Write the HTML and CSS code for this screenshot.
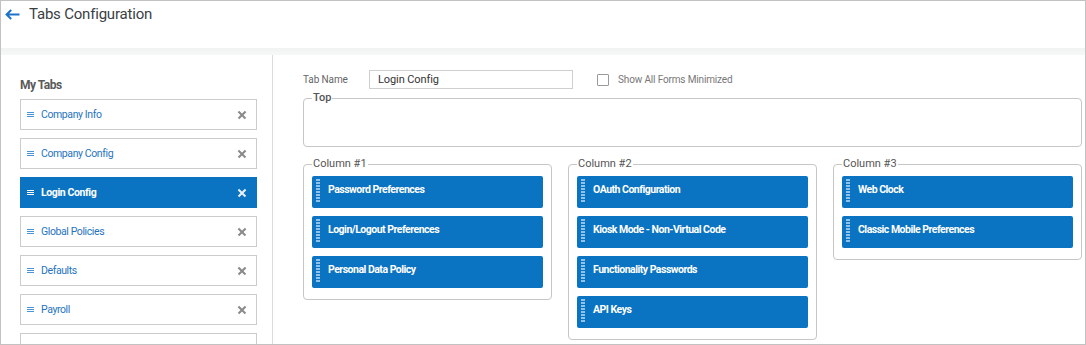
FILE: index.html
```html
<!DOCTYPE html>
<html lang="en">
<head>
<meta charset="utf-8">
<title>Tabs Configuration</title>
<link rel="stylesheet" href="styles.css">
</head>
<body>
<div class="app">
  <header class="topbar">
    <svg class="back" width="15" height="11" viewBox="0 0 15 11" aria-hidden="true">
      <path d="M14.5 5.5H2 M6.2 1 L1.6 5.5 L6.2 10" fill="none" stroke="#1a73c8" stroke-width="2"/>
    </svg>
    <h1 class="title">Tabs Configuration</h1>
  </header>
  <div class="band"></div>
  <div class="main">
    <aside class="tabs-panel">
      <h2 class="tabs-heading">My Tabs</h2>
      <ul class="tab-list">
        <li class="tab-item"><span class="hamburger"></span><span class="tab-label">Company Info</span><span class="close"></span></li>
        <li class="tab-item"><span class="hamburger"></span><span class="tab-label">Company Config</span><span class="close"></span></li>
        <li class="tab-item is-active"><span class="hamburger"></span><span class="tab-label">Login Config</span><span class="close"></span></li>
        <li class="tab-item"><span class="hamburger"></span><span class="tab-label">Global Policies</span><span class="close"></span></li>
        <li class="tab-item"><span class="hamburger"></span><span class="tab-label">Defaults</span><span class="close"></span></li>
        <li class="tab-item"><span class="hamburger"></span><span class="tab-label">Payroll</span><span class="close"></span></li>
        <li class="tab-item"><span class="hamburger"></span><span class="tab-label">HR</span><span class="close"></span></li>
      </ul>
    </aside>
    <section class="editor">
      <div class="name-row">
        <label class="field-label" for="tabname">Tab Name</label>
        <input class="name-input" id="tabname" type="text" value="Login Config">
        <span class="checkbox"></span>
        <span class="check-label">Show All Forms Minimized</span>
      </div>
      <fieldset class="zone zone-top">
        <legend class="zone-legend">Top</legend>
        <div class="zone-empty"></div>
      </fieldset>
      <div class="columns">
        <fieldset class="zone">
          <legend class="zone-legend">Column #1</legend>
          <div class="form-item"><span class="grip"></span><span class="form-name">Password Preferences</span></div>
          <div class="form-item"><span class="grip"></span><span class="form-name">Login/Logout Preferences</span></div>
          <div class="form-item"><span class="grip"></span><span class="form-name">Personal Data Policy</span></div>
        </fieldset>
        <fieldset class="zone">
          <legend class="zone-legend">Column #2</legend>
          <div class="form-item"><span class="grip"></span><span class="form-name">OAuth Configuration</span></div>
          <div class="form-item"><span class="grip"></span><span class="form-name">Kiosk Mode - Non-Virtual Code</span></div>
          <div class="form-item"><span class="grip"></span><span class="form-name">Functionality Passwords</span></div>
          <div class="form-item"><span class="grip"></span><span class="form-name">API Keys</span></div>
        </fieldset>
        <fieldset class="zone">
          <legend class="zone-legend">Column #3</legend>
          <div class="form-item"><span class="grip"></span><span class="form-name">Web Clock</span></div>
          <div class="form-item"><span class="grip"></span><span class="form-name">Classic Mobile Preferences</span></div>
        </fieldset>
      </div>
    </section>
  </div>
</div>
</body>
</html>
```

FILE: styles.css
```css
* { box-sizing: border-box; }

html, body {
  margin: 0;
  padding: 0;
  background: #fff;
}

body {
  font-family: Roboto, "Liberation Sans", Arial, sans-serif;
  color: #333;
}

.app {
  width: 1086px;
  height: 345px;
  border: 1px solid #c2c2c2;
  overflow: hidden;
  display: flex;
  flex-direction: column;
}

.topbar {
  height: 47px;
  flex: none;
  display: flex;
  align-items: flex-start;
  padding: 1px 0 0 4px;
}

.back {
  margin-top: 7px;
  flex: none;
}

.title {
  margin: 2px 0 0 9px;
  font-size: 15px;
  line-height: 20px;
  font-weight: 400;
  letter-spacing: -0.2px;
  color: #3a3f44;
}

.band {
  height: 7px;
  flex: none;
  background: linear-gradient(#f1f2f2, #f6f7f7);
}

.main {
  flex: 1;
  display: flex;
  min-height: 0;
}

.tabs-panel {
  width: 272px;
  flex: none;
  border-right: 1px solid #dcdcdc;
  padding: 22px 15px 0 19px;
}

.tabs-heading {
  margin: 0 0 6px;
  font-size: 12px;
  line-height: 16px;
  font-weight: 700;
  letter-spacing: -0.5px;
  color: #5a5a5a;
}

.tab-list {
  list-style: none;
  margin: 0;
  padding: 0;
}

.tab-item {
  height: 31px;
  margin-bottom: 8px;
  border: 1px solid #cccccc;
  display: flex;
  align-items: center;
  padding: 0 10px 0 6px;
  background: #fff;
}

.hamburger {
  width: 7px;
  height: 5px;
  flex: none;
  margin-top: -1px;
  background: repeating-linear-gradient(to bottom, #4a93d4 0 1px, transparent 1px 2px);
}

.tab-label {
  flex: 1;
  margin-left: 7px;
  font-size: 10.5px;
  letter-spacing: -0.4px;
  color: #1f73bf;
}

.close {
  position: relative;
  width: 9px;
  height: 9px;
  flex: none;
}

.close::before,
.close::after {
  content: "";
  position: absolute;
  left: -0.5px;
  top: 3.6px;
  width: 10px;
  height: 1.8px;
  background: #8a8a8a;
  transform: rotate(45deg);
}

.close::after {
  transform: rotate(-45deg);
}

.tab-item.is-active {
  background: #0b74c2;
  border-color: #0b74c2;
}

.tab-item.is-active .hamburger {
  background: repeating-linear-gradient(to bottom, #fff 0 1px, transparent 1px 2px);
}

.tab-item.is-active .tab-label {
  color: #fff;
  font-weight: 700;
}

.tab-item.is-active .close::before,
.tab-item.is-active .close::after {
  background: #e8f1fa;
}

.editor {
  flex: 1;
  min-width: 0;
  padding: 15px 3px 0 30px;
}

.name-row {
  display: flex;
  align-items: center;
  height: 19px;
}

.field-label {
  width: 66px;
  flex: none;
  font-size: 10px;
  letter-spacing: -0.1px;
  color: #666;
}

.name-input {
  width: 204px;
  height: 19px;
  border: 1px solid #cfcfcf;
  padding: 0 8px;
  margin: 0;
  font-family: inherit;
  font-size: 11px;
  letter-spacing: -0.1px;
  color: #333;
  outline: none;
}

.checkbox {
  width: 12px;
  height: 12px;
  margin-left: 24px;
  border: 1px solid #9a9a9a;
  border-radius: 1px;
  flex: none;
}

.check-label {
  margin-left: 9px;
  font-size: 10px;
  letter-spacing: -0.15px;
  color: #777;
}

.zone {
  margin: 0;
  padding: 5px 8px 11px;
  border: 1px solid #c6c6c6;
  border-radius: 4px;
  min-width: 0;
}

.zone-legend {
  padding: 0 1px;
  font-size: 11px;
  line-height: 14px;
  color: #555;
}

.zone-top {
  margin-top: 2px;
  padding-bottom: 0;
}

.zone-top .zone-legend {
  font-weight: 500;
}

.zone-empty {
  height: 36px;
}

.columns {
  margin-top: 10px;
  display: grid;
  grid-template-columns: repeat(3, 1fr);
  column-gap: 16px;
  align-items: start;
}

.form-item {
  height: 32px;
  background: #0b74c2;
  border-radius: 2px;
  display: flex;
  align-items: flex-start;
  padding-left: 4px;
}

.form-item + .form-item {
  margin-top: 8px;
}

.grip {
  width: 4px;
  height: 24px;
  margin-top: 3px;
  flex: none;
  background: repeating-linear-gradient(to bottom, rgba(190, 220, 245, 0.75) 0 2px, transparent 2px 3px);
}

.form-name {
  margin-left: 8px;
  line-height: 28px;
  font-size: 10.5px;
  font-weight: 700;
  color: #fff;
  letter-spacing: -0.5px;
}
```
